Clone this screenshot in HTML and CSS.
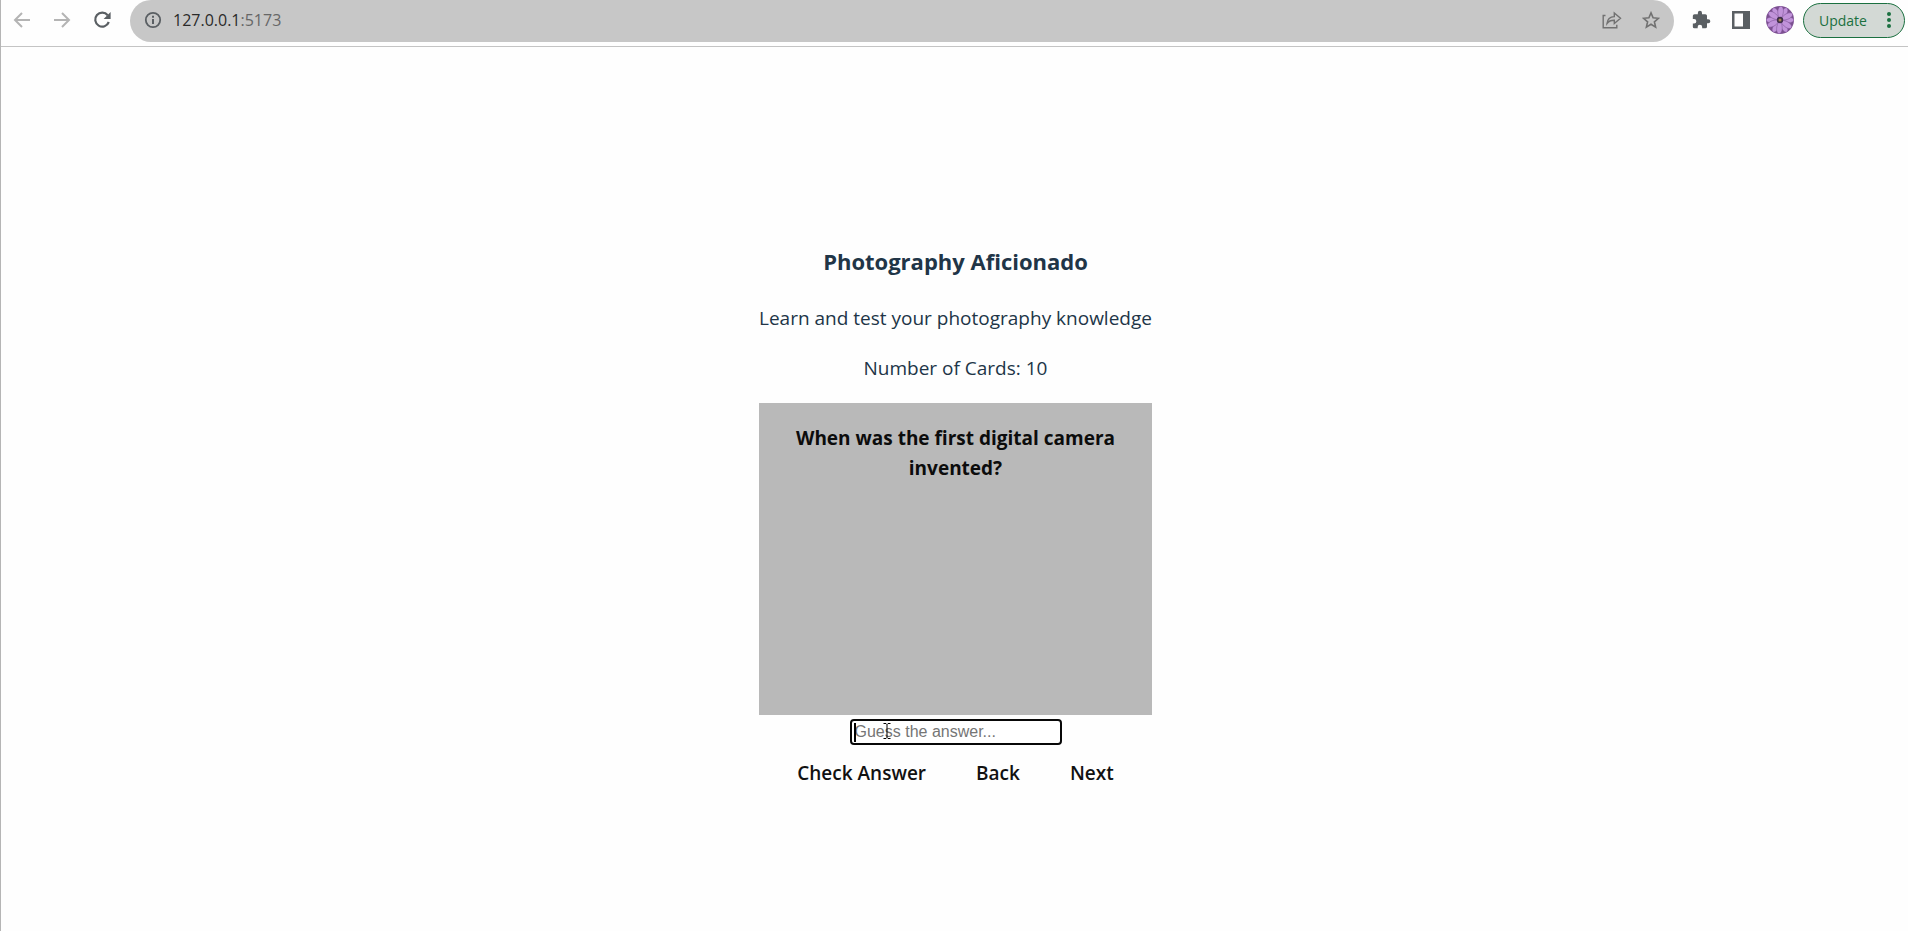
FILE: index.html
```html
<!DOCTYPE html>
<html lang="en">
<head>
<meta charset="utf-8">
<title>Photography Aficionado</title>
<link rel="stylesheet" href="styles.css">
</head>
<body>
<header class="toolbar">
  <nav class="nav">
    <button class="icon-button faded" aria-label="Back in history"><svg width="18" height="16" viewBox="0 0 18 16" fill="none" stroke="currentColor" stroke-width="2"><path d="M17 8H2M9 1 2 8l7 7"/></svg></button>
    <button class="icon-button faded" aria-label="Forward"><svg width="18" height="16" viewBox="0 0 18 16" fill="none" stroke="currentColor" stroke-width="2"><path d="M1 8h15M9 1l7 7-7 7"/></svg></button>
    <button class="icon-button" aria-label="Reload"><svg width="18" height="18" viewBox="0 0 18 18"><path d="M14.7 4.2A7 7 0 1 0 15.8 11" fill="none" stroke="currentColor" stroke-width="2.2"/><path d="M17.6 1v7h-7z" fill="currentColor"/></svg></button>
  </nav>
  <div class="omnibox">
    <svg class="info" width="18" height="18" viewBox="0 0 18 18"><circle cx="9" cy="9" r="7.2" fill="none" stroke="currentColor" stroke-width="1.8"/><path d="M8 8h2v5H8zM8 4.8h2v2H8z" fill="currentColor"/></svg>
    <span class="url">127.0.0.1<span class="port">:5173</span></span>
    <button class="icon-button grey" aria-label="Share"><svg width="20" height="18" viewBox="0 0 20 18" fill="none" stroke="currentColor" stroke-width="1.4"><path d="M3.5 4.5H1.2v12.3h13.6v-3M5 12.5c.4-4.2 3-6.7 7.3-6.9V2l6.2 5.3-6.2 5.3V9.3c-3.3-.1-5.6.9-7.3 3.2z"/></svg></button>
    <button class="icon-button grey" aria-label="Bookmark"><svg width="18" height="18" viewBox="0 0 18 18" fill="none" stroke="currentColor" stroke-width="1.6"><path d="m9 1.9 2.1 4.9 5.4.5-4.1 3.5 1.2 5.3L9 13.3l-4.6 2.8 1.2-5.3-4.1-3.5 5.4-.5z"/></svg></button>
  </div>
  <div class="actions">
    <button class="icon-button" aria-label="Extensions"><svg width="20" height="20" viewBox="1 0 24 24" fill="currentColor"><path d="M20.5 11H19V7a2 2 0 0 0-2-2h-4V3.500a2.500 2.500 0 0 0-5 0V5H4a2 2 0 0 0-2 2v3.800h1.500a2.700 2.700 0 0 1 0 5.400H2V20a2 2 0 0 0 2 2h3.800v-1.500a2.700 2.700 0 0 1 5.400 0V22H17a2 2 0 0 0 2-2v-4h1.500a2.500 2.500 0 0 0 0-5z"/></svg></button>
    <button class="icon-button" aria-label="Side panel"><svg width="18" height="18" viewBox="0 0 18 18"><path d="M0 0h18v18H0zM2.500 2.500v13H11v-13z" fill="currentColor" fill-rule="evenodd"/></svg></button>
    <button class="icon-button" aria-label="Profile"><svg width="28" height="28" viewBox="0 0 28 28"><defs><clipPath id="round"><circle cx="14" cy="14" r="14"/></clipPath><g id="petals" fill="#c193da" stroke="#7d5496" stroke-width=".5"><path id="petal" d="M14 14C10 8 10.500 1 14 0c3.500 1 4 8 0 14z"/><use href="#petal" transform="rotate(60 14 14)"/><use href="#petal" transform="rotate(120 14 14)"/><use href="#petal" transform="rotate(180 14 14)"/><use href="#petal" transform="rotate(240 14 14)"/><use href="#petal" transform="rotate(300 14 14)"/></g></defs><g clip-path="url(#round)"><path d="M0 0h28v28H0z" fill="#7c4f91"/><use href="#petals" transform="rotate(30 14 14)"/><use href="#petals" transform="rotate(4 14 14)"/><circle cx="14" cy="14" r="3.200" fill="#3d2f48"/><circle cx="14" cy="14" r="1.500" fill="#a68552"/></g></svg></button>
    <button class="update">Update<svg width="4" height="16" viewBox="0 0 4 16" fill="currentColor"><circle cx="2" cy="2" r="2"/><circle cx="2" cy="8" r="2"/><circle cx="2" cy="14" r="2"/></svg></button>
  </div>
</header>
<main class="page">
  <div class="deck">
    <h1 class="title">Photography Aficionado</h1>
    <p class="text">Learn and test your photography knowledge</p>
    <p class="text">Number of Cards: 10</p>
    <section class="card"><h2 class="question">When was the first digital camera invented?</h2></section>
    <div class="guess">
      <input class="guess-input" type="text" aria-label="Guess" placeholder="Guess the answer...">
      <span class="caret"></span>
      <svg class="pointer" width="8" height="16" viewBox="0 0 8 16" fill="none" stroke="#000"><path d="M.5.500h2.500l1 1 1-1h2.500M.5 15.500h2.500l1-1 1 1h2.500M4 1.500v13"/></svg>
    </div>
    <div class="controls">
      <button class="control">Check Answer</button>
      <button class="control">Back</button>
      <button class="control">Next</button>
    </div>
  </div>
</main>
</body>
</html>
```
FILE: styles.css
```css
* { box-sizing: border-box; }
body {
  margin: 0;
  min-height: 100vh;
  background: #fefefe;
  border-left: 1px solid #b5b5b5;
  font-family: "Segoe UI", "Open Sans", "Noto Sans", sans-serif;
}
button { border: 0; padding: 0; background: none; font: inherit; color: inherit; }
svg { display: block; flex: none; }

.toolbar {
  display: flex;
  align-items: flex-start;
  height: 47px;
  border-bottom: 1px solid #c4c4c4;
  color: #5a5f63;
}
.nav { display: flex; align-items: center; gap: 22px; height: 40px; padding: 0 19px 0 12px; }
.icon-button { display: flex; align-items: center; justify-content: center; flex: none; }
.nav .icon-button { width: 18px; }
.faded { color: #b4b4b4; }
.grey { color: #717171; }
.omnibox {
  display: flex;
  align-items: center;
  flex: 1;
  gap: 20px;
  height: 42px;
  padding: 0 14px 2px;
  background: #c7c7c7;
  border-radius: 21px;
}
.url { flex: 1; margin-left: -9px; font-size: 16px; color: #2a2a2a; }
.port { color: #666; }
.actions { display: flex; align-items: center; height: 40px; gap: 20px; padding: 0 3px 0 18px; }
.actions .icon-button + .icon-button + .icon-button { margin-left: -4px; }
.update {
  display: flex;
  align-items: center;
  justify-content: space-between;
  width: 102px;
  height: 35px;
  margin-left: -11px;
  padding: 0 13px 0 15px;
  border: 1px solid #1b7040;
  border-radius: 18px;
  background: #d3d9d5;
  color: #1b7040;
  font-size: 14px;
}

.page { display: flex; justify-content: center; padding: 197px 20px 40px 22px; }
.deck { display: flex; flex-direction: column; align-items: center; width: 393px; max-width: 100%; text-align: center; }
.title { margin: 0 0 24px; font-size: 22px; line-height: 35px; color: #213547; }
.text { margin: 0 0 20px; font-size: 19px; line-height: 30px; white-space: nowrap; color: #213547; }
.card { width: 100%; height: 312px; padding: 20px; background: #b9b9b9; }
.question { margin: 0; font-size: 19px; line-height: 30px; color: #0c0c0c; }
.guess { position: relative; margin-top: 4px; }
.guess-input {
  display: block;
  width: 212px;
  height: 26px;
  padding: 0 3px;
  border: 2px solid #080808;
  border-radius: 4px;
  outline: 0;
  background: #fff;
  font: 16px "Liberation Sans", Arial, sans-serif;
}
.guess-input::placeholder { color: #757575; }
.caret { position: absolute; left: 4px; top: 4px; width: 2px; height: 19px; background: #000; }
.pointer { position: absolute; left: 33px; top: 4px; }
.controls { display: flex; gap: 50px; margin-top: 13px; }
.control { font-size: 19px; font-weight: 600; line-height: 30px; white-space: nowrap; color: #111; }
```
